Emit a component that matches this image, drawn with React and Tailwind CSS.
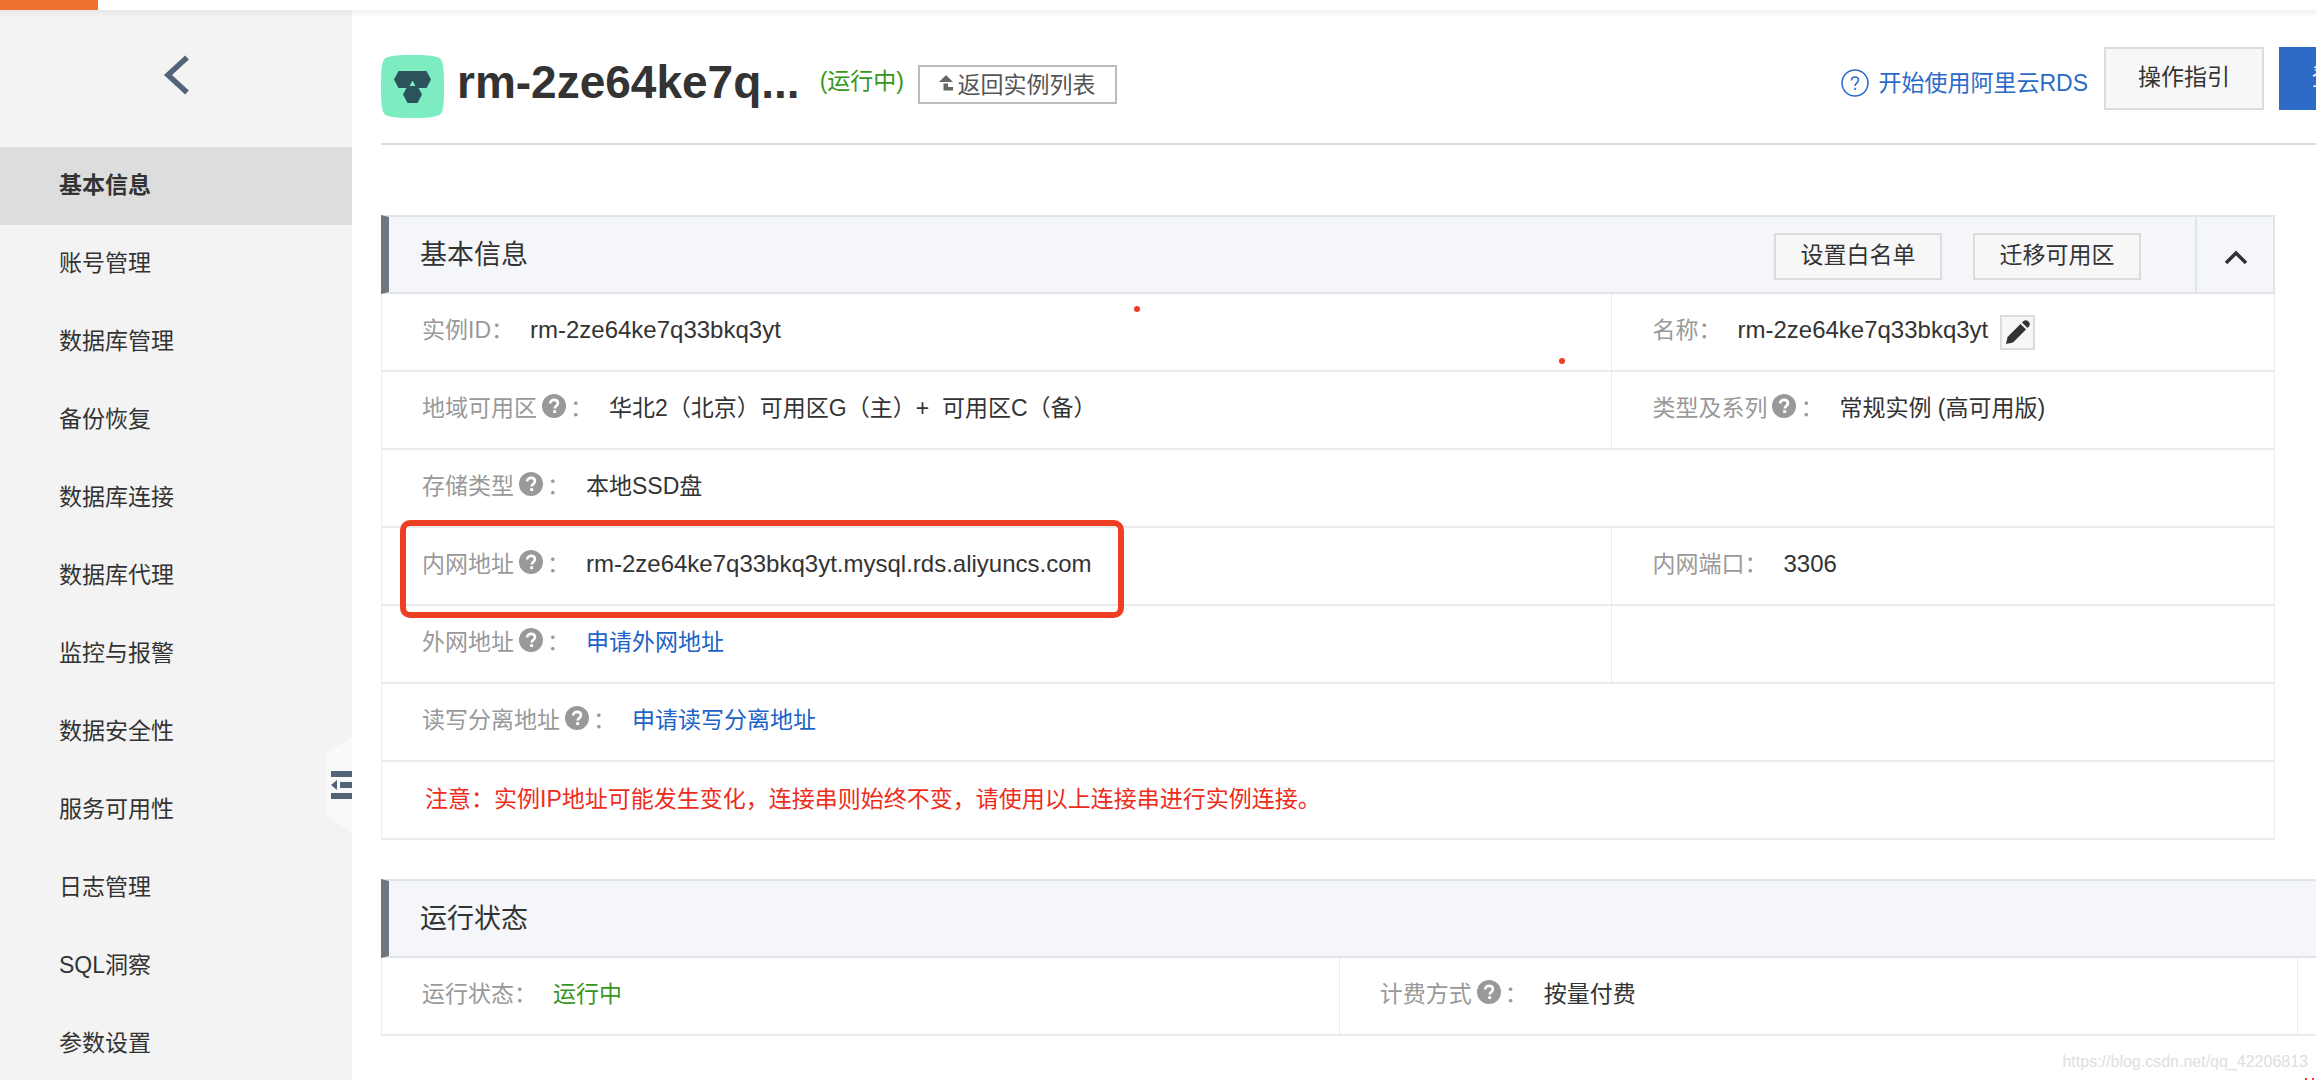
import React from "react";

const menu = [
  "基本信息",
  "账号管理",
  "数据库管理",
  "备份恢复",
  "数据库连接",
  "数据库代理",
  "监控与报警",
  "数据安全性",
  "服务可用性",
  "日志管理",
  "SQL洞察",
  "参数设置",
];

const HelpIcon = () => (
  <svg viewBox="0 0 24 24" className="mr-1 -mt-1 ml-[5px] size-6 shrink-0" aria-label="帮助">
    <circle cx="12" cy="12" r="12" fill="#999" />
    <path
      d="M8.2 9.6c0-2.2 1.6-3.7 3.9-3.7s3.8 1.4 3.8 3.3c0 2.6-3.2 2.8-3.2 5.3"
      fill="none"
      stroke="#fff"
      strokeWidth="2.6"
    />
    <rect x="11.2" y="16.2" width="2.9" height="2.8" fill="#fff" />
  </svg>
);

// 一个「标签：值」单元格
const Cell = ({ label, help, span, first, latin, children, mark }) => (
  <td
    colSpan={span}
    className={`relative h-[78px] border-b-2 border-l border-[#ebebeb] pb-1 pl-10 align-middle ${first ? "" : "w-[35%]"}`}
  >
    {label && (
      <div className="flex items-center whitespace-nowrap">
        <span className="flex items-center text-[#999]">
          {label}
          {help && <HelpIcon />}：
        </span>
        <span className={`ml-4 flex items-center ${latin ? "text-2xl" : ""}`}>{children}</span>
      </div>
    )}
    {mark}
  </td>
);

const PanelHeader = ({ title, children }) => (
  <div className="flex h-[79px] items-center border-y-2 border-l-8 border-y-[#e1e4e8] border-l-[#6d7780] bg-[#f4f6fa] pl-[31px]">
    <h2 className="flex-1 text-[27px]">{title}</h2>
    {children}
  </div>
);

const PanelButton = ({ children }) => (
  <button className="mt-1 mr-[31px] h-[47px] w-[168px] border-2 border-[#dcdcdc] bg-[#f7f7f7] pb-1">
    {children}
  </button>
);

const Sidebar = () => (
  <aside className="relative w-[352px] shrink-0 bg-[#f3f3f3]">
    <div className="flex h-[137px] items-start pt-[45px] pl-[163px]">
      <button aria-label="返回">
        <svg viewBox="0 0 26 40" className="h-10 w-[26px]">
          <path d="M24 2.500 5 20l19 17.500" fill="none" stroke="#546478" strokeWidth="5.5" />
        </svg>
      </button>
    </div>
    <nav>
      {menu.map((item, i) => (
        <a
          key={item}
          href="#"
          className={`flex h-[78px] items-center pb-[2px] pl-[59px] ${i === 0 ? "bg-[#ddd] font-bold" : ""}`}
        >
          {item}
        </a>
      ))}
    </nav>
    {/* 收起侧栏 */}
    <button aria-label="收起" className="absolute top-[727px] right-0">
      <svg viewBox="0 0 26 96" className="h-24 w-[26px]">
        <path d="M26 0v96L0 78V16z" fill="#f9f9f9" />
        <path d="M5 34h21v6H5zM14 45h12v6H14zM5 56h21v6H5zM5 48l6-5v10z" fill="#546478" />
      </svg>
    </button>
  </aside>
);

const InstanceHeader = () => (
  <header className="flex h-[135px] items-center overflow-hidden border-b-2 border-[#dcdcdc] pt-1 whitespace-nowrap">
    <svg viewBox="0 0 63 63" className="mt-4 size-[63px] shrink-0">
      <path
        d="M31.500 0C50 0 57 1.500 59.500 4S63 13 63 31.500s-1 25-3.500 27.500S50 63 31.500 63 6 61.500 3.500 59 0 50 0 31.500 1 6.500 3.500 4 13 0 31.500 0z"
        fill="#7decc0"
      />
      <g fill="#2a535b">
        <path d="M17.500 16h10l4.500 8.500-4.500 8.500h-10L13 24.500z" />
        <path d="M35.500 16h10l4.500 8.500-4.500 8.500h-10L31 24.500z" />
        <path d="M26.500 31h10l4.500 8.500-4.500 8.500h-10L22 39.500z" />
        <path d="M27 16h9l-2.500 10h-4z" />
      </g>
    </svg>
    <h1 className="mt-2 ml-[13px] pb-[2px] text-[46px] leading-none font-bold">rm-2ze64ke7q...</h1>
    <span className="mt-1 ml-5 text-[#35971c]">(运行中)</span>
    <button className="mt-3 ml-[14px] flex h-[39px] w-[199px] items-center justify-center border-2 border-[#bbb] text-[#555]">
      <svg viewBox="0 0 14 16" className="mr-1 mb-1 h-4 w-[14px]">
        <path d="m7 0 7 7H0zM4.500 8.500H9V12h5v3.500H4.500z" fill="#666" />
      </svg>
      返回实例列表
    </button>
    <a href="#" className="mt-2 ml-auto flex items-center text-[#2a6bc8]">
      <svg viewBox="0 0 28 28" className="mr-[9px] size-7" fill="none" stroke="currentColor">
        <circle cx="14" cy="14" r="13" strokeWidth="1.500" />
        <path
          d="M10.500 11.500c0-2.200 1.400-3.500 3.500-3.500s3.500 1.300 3.500 3.200c0 2.400-3.500 2.900-3.500 5.800M14 18.800v2.200"
          strokeWidth="1.600"
        />
      </svg>
      开始使用阿里云RDS
    </a>
    <button className="ml-4 h-[63px] w-40 border-2 border-[#dcdcdc] bg-[#f7f7f7] pb-1">操作指引</button>
    <button className="ml-[15px] h-[63px] w-[37px] overflow-hidden bg-[#2d6bc6] pb-1 pl-[33px] text-left text-white">
      登录数据库
    </button>
  </header>
);

export default function App() {
  return (
    <div className="flex h-screen flex-col overflow-hidden bg-white font-['Liberation_Sans','Noto_Sans_CJK_SC',sans-serif] text-[23px] leading-8 text-[#333]">
      <div className="h-[10px] shrink-0">
        <div className="h-full w-[98px] bg-[#ee712d]" />
      </div>
      <div className="relative flex min-h-0 flex-1">
        <Sidebar />
        <main className="min-w-0 flex-1 pl-[29px]">
          <InstanceHeader />

          <section className="relative mt-[70px] mr-[41px]">
            <PanelHeader title="基本信息">
              <PanelButton>设置白名单</PanelButton>
              <PanelButton>迁移可用区</PanelButton>
              <button
                aria-label="收起面板"
                className="ml-[23px] flex h-full w-20 items-center justify-center border-x-2 border-[#e1e4e8] pt-1 pl-px"
              >
                <svg viewBox="0 0 24 14" className="h-[14px] w-6">
                  <path d="m2 13 10-10 10 10" fill="none" stroke="#333" strokeWidth="3.500" />
                </svg>
              </button>
            </PanelHeader>
            <table className="w-full border-separate border-spacing-0 border-r border-[#ebebeb]">
              <tbody>
                <tr>
                  <Cell first label="实例ID" latin>rm-2ze64ke7q33bkq3yt</Cell>
                  <Cell label="名称" latin>
                    rm-2ze64ke7q33bkq3yt
                    <button
                      aria-label="编辑名称"
                      className="mt-1 ml-3 flex size-[35px] items-center justify-center border-2 border-[#dcdcdc] bg-[#f7f7f7]"
                    >
                      <svg viewBox="0 0 24 24" className="size-6" fill="#333">
                        <path d="M0 24 1.500 17 14.500 4l5.500 5.500L7 22.500z" />
                        <path d="m16 2.500 1.200-1.200a3.900 3.900 0 0 1 5.500 5.500L21.500 8z" />
                      </svg>
                    </button>
                  </Cell>
                </tr>
                <tr>
                  <Cell first label="地域可用区" help>
                    华北2（北京）可用区G（主）+&nbsp; 可用区C（备）
                  </Cell>
                  <Cell label="类型及系列" help>常规实例 (高可用版)</Cell>
                </tr>
                <tr>
                  <Cell first span={2} label="存储类型" help>本地SSD盘</Cell>
                </tr>
                <tr>
                  <Cell
                    first
                    label="内网地址"
                    help
                    latin
                    mark={
                      <div className="absolute -top-2 -bottom-[14px] left-[18px] w-[724px] rounded-[10px] border-6 border-[#ee3f24]" />
                    }
                  >
                    rm-2ze64ke7q33bkq3yt.mysql.rds.aliyuncs.com
                  </Cell>
                  <Cell label="内网端口" latin>3306</Cell>
                </tr>
                <tr>
                  <Cell first label="外网地址" help>
                    <a href="#" className="text-[#2063c8]">申请外网地址</a>
                  </Cell>
                  <Cell />
                </tr>
                <tr>
                  <Cell first span={2} label="读写分离地址" help>
                    <a href="#" className="text-[#2063c8]">申请读写分离地址</a>
                  </Cell>
                </tr>
                <tr>
                  <td
                    colSpan={2}
                    className="h-[78px] border-b-2 border-l border-[#ebebeb] pb-[2px] pl-[43px] text-[#ee2c1c]"
                  >
                    注意：实例IP地址可能发生变化，连接串则始终不变，请使用以上连接串进行实例连接。
                  </td>
                </tr>
              </tbody>
            </table>
            {/* 标注红点 */}
            <i className="absolute top-[91px] left-[753px] size-[6px] rounded-full bg-[#f03a22]" />
            <i className="absolute top-[143px] left-[1178px] size-[6px] rounded-full bg-[#f03a22]" />
          </section>

          <section className="mt-[39px]">
            <PanelHeader title="运行状态" />
            <table className="w-full table-fixed border-separate border-spacing-0">
              <colgroup>
                <col className="w-[49.5%]" />
                <col className="w-[49.5%]" />
                <col />
              </colgroup>
              <tbody>
                <tr>
                  <Cell first label="运行状态">
                    <span className="text-[#35971c]">运行中</span>
                  </Cell>
                  <Cell first label="计费方式" help>按量付费</Cell>
                  <td className="border-b-2 border-l border-[#ebebeb]" />
                </tr>
              </tbody>
            </table>
          </section>
        </main>
        <div className="pointer-events-none absolute inset-x-0 top-0 h-2 bg-linear-to-b from-black/5 to-transparent" />
        <span className="absolute right-2 bottom-1 text-base leading-7 text-[#dedede]">
          https://blog.csdn.net/qq_42206813
        </span>
        <div className="absolute right-[2px] bottom-0 flex gap-[5px]">
          <i className="size-[2px] bg-[#f03a22]" />
          <i className="size-[2px] bg-[#f03a22]" />
        </div>
      </div>
    </div>
  );
}
